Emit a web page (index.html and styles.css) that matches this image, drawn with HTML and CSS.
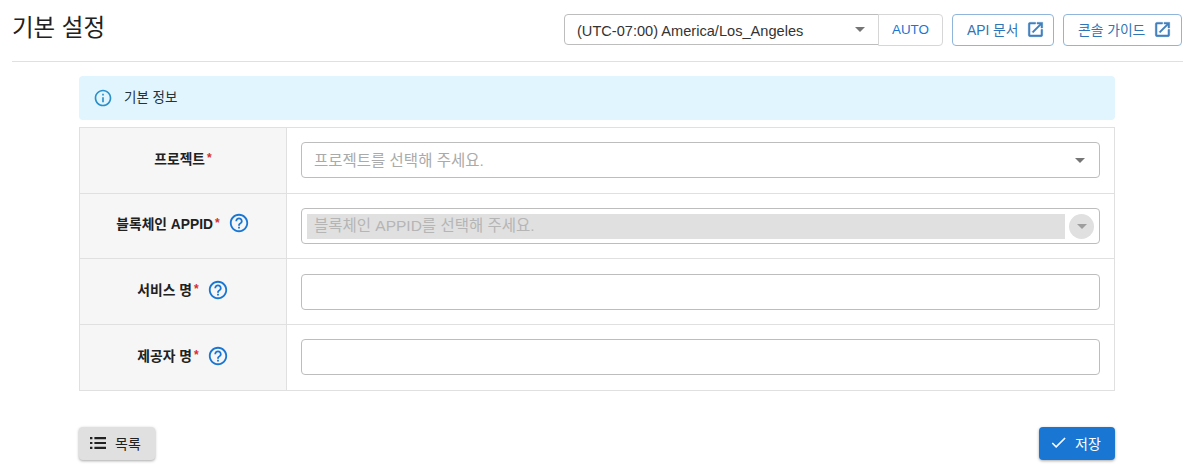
FILE: index.html
```html
<!DOCTYPE html>
<html lang="ko">
<head>
<meta charset="utf-8">
<title>기본 설정</title>
<link rel="stylesheet" href="styles.css">
</head>
<body>
<header class="page-head">
  <h1 class="page-title">기본 설정</h1>
  <div class="head-actions">
    <div class="tz-group">
      <div class="tz-select"><span>(UTC-07:00) America/Los_Angeles</span><i class="caret"></i></div>
      <button class="tz-auto">AUTO</button>
    </div>
    <a class="link-btn link-api">API 문서<svg class="ext" viewBox="0 0 24 24"><path d="M19 19H5V5h7V3H5a2 2 0 0 0-2 2v14a2 2 0 0 0 2 2h14a2 2 0 0 0 2-2v-7h-2v7zM14 3v2h3.59l-9.83 9.83 1.41 1.41L19 6.41V10h2V3h-7z"/></svg></a>
    <a class="link-btn link-console">콘솔 가이드<svg class="ext" viewBox="0 0 24 24"><path d="M19 19H5V5h7V3H5a2 2 0 0 0-2 2v14a2 2 0 0 0 2 2h14a2 2 0 0 0 2-2v-7h-2v7zM14 3v2h3.59l-9.83 9.83 1.41 1.41L19 6.41V10h2V3h-7z"/></svg></a>
  </div>
</header>
<main class="content">
  <div class="alert">
    <svg class="alert-icon" viewBox="0 0 24 24"><path d="M11 7h2v2h-2zm0 4h2v6h-2zm1-9C6.48 2 2 6.48 2 12s4.48 10 10 10 10-4.48 10-10S17.52 2 12 2zm0 18c-4.41 0-8-3.59-8-8s3.59-8 8-8 8 3.59 8 8-3.59 8-8 8z"/></svg>
    <span class="alert-text">기본 정보</span>
  </div>
  <div class="form-table">
    <div class="row row-first">
      <div class="label"><b>프로젝트</b><em>*</em></div>
      <div class="field"><div class="input select"><span class="ph">프로젝트를 선택해 주세요.</span><i class="caret"></i></div></div>
    </div>
    <div class="row row-second">
      <div class="label"><b>블록체인 APPID</b><em>*</em><svg class="help" viewBox="0 0 24 24"><path d="M11 18h2v-2h-2v2zm1-16C6.48 2 2 6.48 2 12s4.48 10 10 10 10-4.48 10-10S17.52 2 12 2zm0 18c-4.41 0-8-3.59-8-8s3.59-8 8-8 8 3.59 8 8-3.59 8-8 8zm0-14c-2.21 0-4 1.79-4 4h2c0-1.1.9-2 2-2s2 .9 2 2c0 2-3 1.75-3 5h2c0-2.25 3-2.5 3-5 0-2.21-1.79-4-4-4z"/></svg></div>
      <div class="field"><div class="input select disabled"><span class="ph-box">블록체인 APPID를 선택해 주세요.</span><span class="round"><i class="caret"></i></span></div></div>
    </div>
    <div class="row row-third">
      <div class="label"><b>서비스 명</b><em>*</em><svg class="help" viewBox="0 0 24 24"><path d="M11 18h2v-2h-2v2zm1-16C6.48 2 2 6.48 2 12s4.48 10 10 10 10-4.48 10-10S17.52 2 12 2zm0 18c-4.41 0-8-3.59-8-8s3.59-8 8-8 8 3.59 8 8-3.59 8-8 8zm0-14c-2.21 0-4 1.79-4 4h2c0-1.1.9-2 2-2s2 .9 2 2c0 2-3 1.75-3 5h2c0-2.25 3-2.5 3-5 0-2.21-1.79-4-4-4z"/></svg></div>
      <div class="field"><div class="input"></div></div>
    </div>
    <div class="row row-fourth">
      <div class="label"><b>제공자 명</b><em>*</em><svg class="help" viewBox="0 0 24 24"><path d="M11 18h2v-2h-2v2zm1-16C6.48 2 2 6.48 2 12s4.48 10 10 10 10-4.48 10-10S17.52 2 12 2zm0 18c-4.41 0-8-3.59-8-8s3.59-8 8-8 8 3.59 8 8-3.59 8-8 8zm0-14c-2.21 0-4 1.79-4 4h2c0-1.1.9-2 2-2s2 .9 2 2c0 2-3 1.75-3 5h2c0-2.25 3-2.5 3-5 0-2.21-1.79-4-4-4z"/></svg></div>
      <div class="field"><div class="input"></div></div>
    </div>
  </div>
  <div class="actions">
    <button class="btn btn-list"><svg viewBox="0 0 16 12"><path d="M0 0h2.4v2.2H0zM0 4.9h2.4v2.2H0zM0 9.8h2.4V12H0zM4.4 0H16v2.2H4.4zM4.4 4.9H16v2.2H4.4zM4.4 9.8H16V12H4.4z"/></svg>목록</button>
    <button class="btn btn-save"><svg viewBox="0 0 24 24"><path d="M9 16.17 4.83 12l-1.42 1.41L9 19 21 7l-1.41-1.41z"/></svg>저장</button>
  </div>
</main>
</body>
</html>
```
FILE: styles.css
```css
* { box-sizing: border-box; }
html, body { margin: 0; padding: 0; }
body {
  width: 1187px;
  height: 468px;
  overflow: hidden;
  background: #fff;
  color: #212121;
  font-family: "Liberation Sans", "Noto Sans CJK KR", sans-serif;
  font-size: 13px;
}
.page-head {
  margin: 0 4px 0 12px;
  height: 62px;
  padding-top: 14px;
  border-bottom: 1px solid #e0e0e0;
  display: flex;
  justify-content: space-between;
  align-items: flex-start;
}
.page-title {
  margin: 0;
  font-size: 23.5px;
  font-weight: 400;
  line-height: 28px;
  color: #212121;
}
.head-actions { display: flex; gap: 9px; margin-right: 1px; }
.tz-group { display: flex; }
.tz-select {
  width: 315px;
  height: 31px;
  border: 1px solid #bdbdbd;
  border-radius: 4px 0 0 4px;
  padding: 2px 13px 0 12px;
  display: flex;
  align-items: center;
  justify-content: space-between;
  font-size: 14.6px;
  color: #333;
}
.caret {
  display: block;
  width: 0;
  height: 0;
  border-left: 5px solid transparent;
  border-right: 5px solid transparent;
  border-top: 5px solid #757575;
}
.tz-select .caret { margin-top: -3px; }
.tz-auto {
  width: 65px;
  height: 32px;
  margin-left: -1px;
  border: 1px solid #d6d6d6;
  border-radius: 0 4px 4px 0;
  background: #fff;
  color: #1976d2;
  font: inherit;
  font-size: 13.4px;
  padding: 0 0 2px;
}
.link-btn {
  height: 32px;
  border: 1px solid #8fb6da;
  border-radius: 4px;
  color: #2f74b5;
  font-size: 13.8px;
  display: flex;
  align-items: center;
  gap: 8px;
  padding: 0 0 2px 14px;
}
.link-api { width: 102px; }
.link-console { width: 119px; }
.ext { width: 19px; height: 19px; fill: #3f7fbd; stroke: #3f7fbd; stroke-width: .7; }
.content { width: 1036px; margin: 14px 0 0 79px; }
.alert {
  height: 44px;
  background: #e1f5fe;
  border-radius: 4px;
  display: flex;
  align-items: center;
  padding-left: 14px;
  gap: 11px;
  font-size: 13.5px;
  color: #263238;
}
.alert-icon { width: 20px; height: 20px; fill: #2b8fc9; }
.alert-text { padding-bottom: 5px; }
.form-table {
  margin-top: 7px;
  border: 1px solid #e0e0e0;
  border-bottom: 0;
}
.row {
  display: grid;
  grid-template-columns: 207px 1fr;
  border-bottom: 1px solid #e0e0e0;
  height: 66px;
}
.row-second { height: 65px; }
.row-third .field { padding-top: 15px; }
.label {
  background: #f6f6f6;
  border-right: 1px solid #e0e0e0;
  display: flex;
  align-items: center;
  justify-content: center;
  font-size: 13.8px;
  color: #212121;
  padding-bottom: 4px;
}
.label b { font-weight: 700; padding-bottom: 2px; }
.label em {
  color: #d32f2f;
  font-style: normal;
  font-weight: 700;
  font-size: 12px;
  margin-left: 2px;
  padding-bottom: 2px;
}
.help { width: 22px; height: 22px; fill: #1976d2; margin-left: 8px; }
.row-second .help { margin-bottom: 2px; }
.field { padding: 14px 14px 0 14px; }
.input {
  height: 36px;
  border: 1px solid #bdbdbd;
  border-radius: 4px;
  background: #fff;
}
.select {
  display: flex;
  align-items: center;
  justify-content: space-between;
  padding: 0 14px 0 12px;
  font-size: 15.5px;
}
.ph { color: #aaa; padding-bottom: 2px; }
.disabled { padding: 0 5px; }
.ph-box {
  flex: 1;
  height: 25px;
  line-height: 23px;
  background: #e0e0e0;
  color: #b5b5b5;
  padding-left: 7px;
}
.round {
  width: 25px;
  height: 25px;
  margin-left: 4px;
  border-radius: 50%;
  background: #e0e0e0;
  display: flex;
  align-items: center;
  justify-content: center;
}
.round .caret { border-top-color: #9e9e9e; }
.actions {
  margin-top: 36px;
  display: flex;
  justify-content: space-between;
}
.btn {
  width: 76px;
  height: 33px;
  border: 0;
  border-radius: 4px;
  font: inherit;
  font-size: 14px;
  display: flex;
  align-items: center;
  padding: 0 0 2px 11px;
  box-shadow: 0 1px 3px rgba(0,0,0,.35);
}
.btn svg { flex: none; }
.btn-list { background: #e0e0e0; color: #212121; gap: 9px; }
.btn-list svg { fill: #212121; width: 16px; height: 12px; }
.btn-save { background: #1976d2; color: #fff; gap: 7px; padding-left: 10px; }
.btn-save svg { fill: #fff; width: 19px; height: 19px; }
```
